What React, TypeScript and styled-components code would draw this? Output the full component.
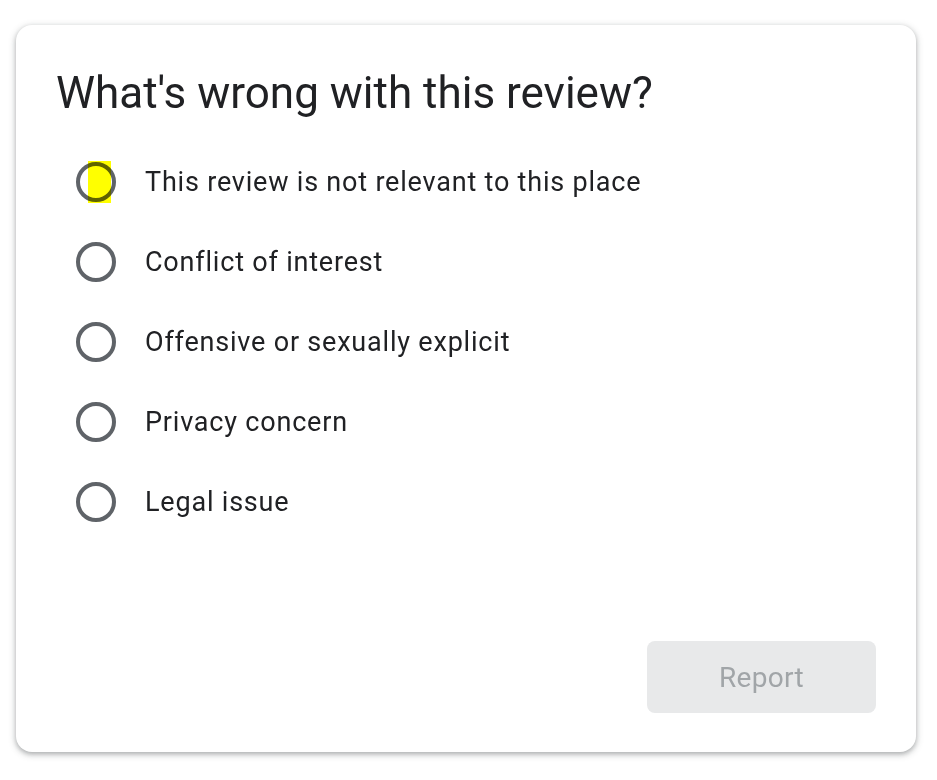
import React, { useState } from "react";
import styled, { createGlobalStyle } from "styled-components";

const Global = createGlobalStyle`
  html, body { margin: 0; padding: 0; background: #ffffff; }
  body { font-family: Roboto, "Noto Sans", Arial, sans-serif; }
`;

const Page = styled.div`
  padding: 25px 21px 28px 16px;
`;

const Card = styled.div`
  width: 900px;
  height: 727px;
  box-sizing: border-box;
  background: #fff;
  border-radius: 16px;
  box-shadow: 0 2px 4px rgba(60, 64, 67, 0.3), 0 2px 6px 2px rgba(60, 64, 67, 0.15);
  padding: 40px 40px 39px 40px;
  display: flex;
  flex-direction: column;
`;

const Title = styled.h1`
  margin: 0;
  font-size: 44px;
  line-height: 56px;
  font-weight: 400;
  color: #202124;
`;

const Options = styled.div`
  margin-top: 21px;
  display: flex;
  flex-direction: column;
`;

const Option = styled.label`
  display: flex;
  align-items: center;
  height: 80px;
  cursor: pointer;
`;

const RadioBox = styled.span`
  position: relative;
  width: 80px;
  height: 80px;
  display: flex;
  align-items: center;
  justify-content: center;
  flex-shrink: 0;
`;

const Ring = styled.span`
  width: 40px;
  height: 40px;
  box-sizing: border-box;
  border-radius: 50%;
  border: 4px solid #5f6368;
`;

const Highlight = styled.span`
  position: absolute;
  left: 32px;
  top: 19px;
  width: 23px;
  height: 42px;
  background: #ffff00;
  mix-blend-mode: multiply;
`;

const Label = styled.span`
  margin-left: 9px;
  font-size: 27px;
  color: #202124;
  letter-spacing: 0.8px;
`;

const Footer = styled.div`
  margin-top: auto;
  display: flex;
  justify-content: flex-end;
`;

const Button = styled.button`
  width: 229px;
  height: 72px;
  border: none;
  border-radius: 8px;
  background: #e8e9ea;
  color: #a1a5a8;
  font-family: Roboto, "Noto Sans", Arial, sans-serif;
  font-size: 28px;
  font-weight: 400;
  letter-spacing: 0.3px;
`;

const options = [
  "This review is not relevant to this place",
  "Conflict of interest",
  "Offensive or sexually explicit",
  "Privacy concern",
  "Legal issue",
];

export default function App() {
  const [sel] = useState<number | null>(null);
  return (
    <>
      <Global />
      <Page>
        <Card>
          <Title>What's wrong with this review?</Title>
          <Options>
            {options.map((o, i) => (
              <Option key={o}>
                <RadioBox>
                  <Ring />
                  {i === 0 && sel === null && <Highlight />}
                </RadioBox>
                <Label>{o}</Label>
              </Option>
            ))}
          </Options>
          <Footer>
            <Button disabled>Report</Button>
          </Footer>
        </Card>
      </Page>
    </>
  );
}
